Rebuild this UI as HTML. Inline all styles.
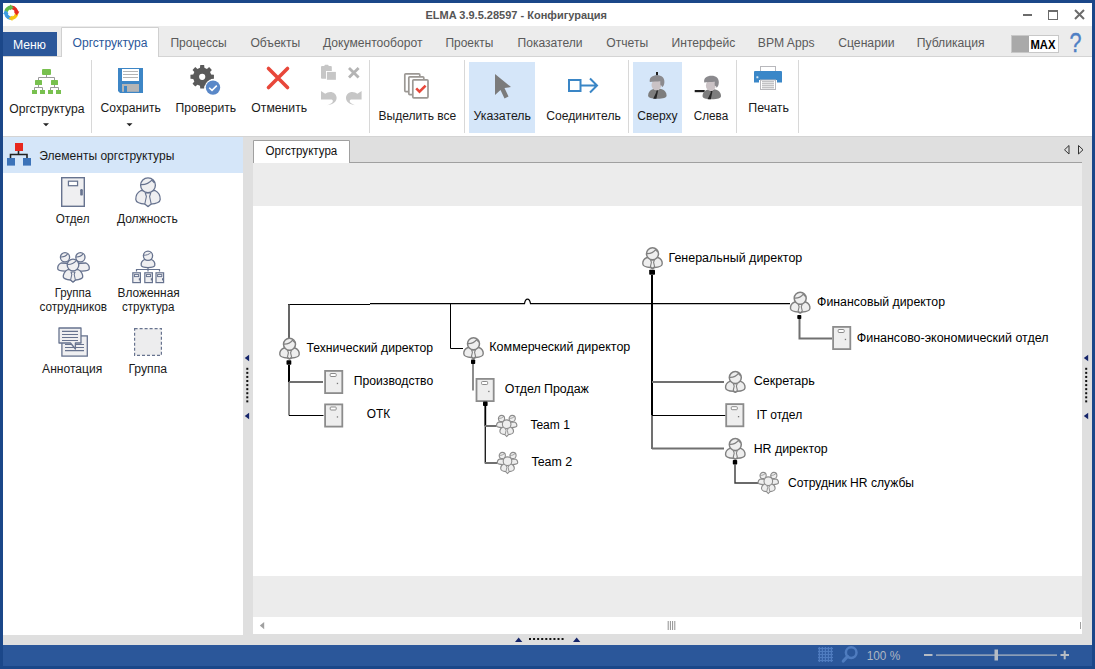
<!DOCTYPE html>
<html><head><meta charset="utf-8"><title>ELMA</title>
<style>html,body{margin:0;padding:0;width:1095px;height:669px;overflow:hidden;background:#1b4789}
svg{display:block} text{font-family:"Liberation Sans", sans-serif;}</style></head>
<body><svg width="1095" height="669" viewBox="0 0 1095 669">
<rect x="0" y="0" width="1095" height="669" fill="#1b4789" />
<rect x="3" y="3" width="1089" height="23" fill="#ffffff" />
<rect x="3" y="26" width="1089" height="31" fill="#ececec" />
<rect x="3" y="56" width="1089" height="1" fill="#d4d4d4" />
<rect x="3" y="57" width="1089" height="79" fill="#ffffff" />
<rect x="3" y="136" width="1089" height="1" fill="#d4d4d4" />
<g transform="translate(11.2,12.8)">
<path d="M-7,-1.6 A7.2,7.2 0 0 1 0.6,-7.2 L0.4,-3.6 A3.6,3.6 0 0 0 -3.5,-0.9 Z" fill="#62b94a"/>
<path d="M0.6,-7.2 A7.2,7.2 0 0 1 7.2,0.6 L3.6,0.4 A3.6,3.6 0 0 0 0.4,-3.6 Z" fill="#e62a1f"/>
<path d="M7.2,0.6 A7.2,7.2 0 0 1 -0.6,7.2 L-0.4,3.6 A3.6,3.6 0 0 0 3.6,0.4 Z" fill="#f6c412"/>
<path d="M-0.6,7.2 A7.2,7.2 0 0 1 -7,-1.6 L-3.5,-0.9 A3.6,3.6 0 0 0 -0.4,3.6 Z" fill="#3d9be0"/>
<path d="M-1.2,-8.2 L2.6,-5.4 L-1.2,-2.6 Z" fill="#62b94a"/>
<path d="M8.2,-1.2 L5.4,2.6 L2.6,-1.2 Z" fill="#e62a1f"/>
<path d="M1.2,8.2 L-2.6,5.4 L1.2,2.6 Z" fill="#f6c412"/>
<path d="M-8.2,1.2 L-5.4,-2.6 L-2.6,1.2 Z" fill="#3d9be0"/>
</g>
<text x="425.5" y="18.5" font-size="11" fill="#555555" font-weight="bold" text-anchor="start" textLength="181.5" lengthAdjust="spacingAndGlyphs" >ELMA 3.9.5.28597 - Конфигурация</text>
<rect x="1023" y="14" width="9" height="2" fill="#6b6b6b" />
<rect x="1048.5" y="10.5" width="9" height="9" fill="none" stroke="#6b6b6b" stroke-width="1"/>
<rect x="1048" y="10" width="10" height="2" fill="#6b6b6b" />
<path d="M1075,10 L1084,19 M1084,10 L1075,19" stroke="#6b6b6b" stroke-width="2"/>
<rect x="3" y="32" width="54" height="24" fill="#2b579a" />
<text x="13" y="48.8" font-size="12" fill="#ffffff" font-weight="normal" text-anchor="start" textLength="33" lengthAdjust="spacingAndGlyphs" >Меню</text>
<path d="M61.5,57 L61.5,27.5 L158.5,27.5 L158.5,57" fill="#ffffff" stroke="#d0d0d0" stroke-width="1"/>
<text x="72.5" y="47" font-size="12" fill="#2b579a" font-weight="normal" text-anchor="start" textLength="75" lengthAdjust="spacingAndGlyphs" >Оргструктура</text>
<text x="170.4" y="47" font-size="12" fill="#5a5a5a" font-weight="normal" text-anchor="start" textLength="56.2" lengthAdjust="spacingAndGlyphs" >Процессы</text>
<text x="250.4" y="47" font-size="12" fill="#5a5a5a" font-weight="normal" text-anchor="start" textLength="49.9" lengthAdjust="spacingAndGlyphs" >Объекты</text>
<text x="323" y="47" font-size="12" fill="#5a5a5a" font-weight="normal" text-anchor="start" textLength="99.5" lengthAdjust="spacingAndGlyphs" >Документооборот</text>
<text x="445.5" y="47" font-size="12" fill="#5a5a5a" font-weight="normal" text-anchor="start" textLength="47.9" lengthAdjust="spacingAndGlyphs" >Проекты</text>
<text x="517.5" y="47" font-size="12" fill="#5a5a5a" font-weight="normal" text-anchor="start" textLength="65.0" lengthAdjust="spacingAndGlyphs" >Показатели</text>
<text x="606.3" y="47" font-size="12" fill="#5a5a5a" font-weight="normal" text-anchor="start" textLength="41.9" lengthAdjust="spacingAndGlyphs" >Отчеты</text>
<text x="671.5" y="47" font-size="12" fill="#5a5a5a" font-weight="normal" text-anchor="start" textLength="63.8" lengthAdjust="spacingAndGlyphs" >Интерфейс</text>
<text x="757.8" y="47" font-size="12" fill="#5a5a5a" font-weight="normal" text-anchor="start" textLength="56.8" lengthAdjust="spacingAndGlyphs" >BPM Apps</text>
<text x="838.2" y="47" font-size="12" fill="#5a5a5a" font-weight="normal" text-anchor="start" textLength="56.4" lengthAdjust="spacingAndGlyphs" >Сценарии</text>
<text x="916.7" y="47" font-size="12" fill="#5a5a5a" font-weight="normal" text-anchor="start" textLength="68.0" lengthAdjust="spacingAndGlyphs" >Публикация</text>
<rect x="1011.5" y="35.5" width="47" height="17" fill="#ffffff" stroke="#c8c8c8" stroke-width="1"/>
<rect x="1012" y="36" width="17" height="16" fill="#a9a9a9" />
<text x="1030.5" y="49" font-size="12" fill="#000" font-weight="bold" text-anchor="start" textLength="25" lengthAdjust="spacingAndGlyphs" >MAX</text>
<text x="1069.5" y="52" font-size="28" fill="#4f7fc4" font-weight="normal" text-anchor="start" textLength="12" lengthAdjust="spacingAndGlyphs" stroke="#4f7fc4" stroke-width="0.4">?</text>
<rect x="91" y="60" width="1" height="73" fill="#d8d8d8" />
<rect x="369" y="60" width="1" height="73" fill="#d8d8d8" />
<rect x="464" y="60" width="1" height="73" fill="#d8d8d8" />
<rect x="628" y="60" width="1" height="73" fill="#d8d8d8" />
<rect x="736" y="60" width="1" height="73" fill="#d8d8d8" />
<rect x="798" y="60" width="1" height="73" fill="#d8d8d8" />
<rect x="469" y="62" width="66" height="71" fill="#d5e6f9" />
<rect x="633" y="62" width="49" height="71" fill="#d5e6f9" />
<g>
<path d="M46.5,75 V77.5 M38.5,80 V77.5 H54.5 V80 M38.5,85 V87.5 M34.5,90 V87.5 H42.5 V90 M54.5,85 V87.5 M50.5,90 V87.5 H58.5 V90" stroke="#9a9a9a" stroke-width="1" fill="none"/>
<rect x="42" y="69" width="9" height="6" rx="1" fill="#78c04f"/>
<rect x="35" y="80" width="7" height="5" rx="0.5" fill="#78c04f"/>
<rect x="51" y="80" width="7" height="5" rx="0.5" fill="#78c04f"/>
<rect x="32" y="90" width="5" height="4" fill="#78c04f"/>
<rect x="40" y="90" width="5" height="4" fill="#78c04f"/>
<rect x="48" y="90" width="5" height="4" fill="#78c04f"/>
<rect x="56" y="90" width="5" height="4" fill="#78c04f"/>
</g>
<text x="9.2" y="113.2" font-size="12" fill="#1a1a1a" font-weight="normal" text-anchor="start" textLength="75.3" lengthAdjust="spacingAndGlyphs" >Оргструктура</text>
<path d="M43,123.2 H49 L46,126.2 Z" fill="#222"/>
<g>
<path d="M118,68 H143 V93 H120 L118,91 Z" fill="#3d86c6"/>
<rect x="122" y="69" width="17" height="12" fill="#ffffff"/>
<path d="M123,71.5 H138 M123,74.5 H138 M123,77.5 H138" stroke="#b4b4b4" stroke-width="1"/>
<rect x="122" y="84" width="17" height="7.8" fill="#b5b5b5"/>
<rect x="124" y="86" width="3" height="6" fill="#3d86c6"/>
</g>
<text x="100.5" y="112" font-size="12" fill="#1a1a1a" font-weight="normal" text-anchor="start" textLength="60.4" lengthAdjust="spacingAndGlyphs" >Сохранить</text>
<path d="M126.5,123.2 H132.5 L129.5,126.2 Z" fill="#222"/>
<path d="M211.13,74.58 L213.94,74.85 L213.94,78.75 L211.13,79.02 L210.08,81.55 L211.88,83.72 L209.12,86.48 L206.95,84.68 L204.42,85.73 L204.15,88.54 L200.25,88.54 L199.98,85.73 L197.45,84.68 L195.28,86.48 L192.52,83.72 L194.32,81.55 L193.27,79.02 L190.46,78.75 L190.46,74.85 L193.27,74.58 L194.32,72.05 L192.52,69.88 L195.28,67.12 L197.45,68.92 L199.98,67.87 L200.25,65.06 L204.15,65.06 L204.42,67.87 L206.95,68.92 L209.12,67.12 L211.88,69.88 L210.08,72.05 Z M205.29999999999998,76.8 A3.1,3.1 0 1 0 199.1,76.8 A3.1,3.1 0 1 0 205.29999999999998,76.8 Z" fill="#5a5a5a" fill-rule="evenodd"/>
<circle cx="213" cy="87.6" r="8.3" fill="#ffffff"/><circle cx="213" cy="87.6" r="7.2" fill="#5a88c8"/>
<path d="M209.2,87.8 L212,90.4 L216.8,85.6" stroke="#fff" stroke-width="1.5" fill="none"/>
<text x="175.5" y="112" font-size="12" fill="#1a1a1a" font-weight="normal" text-anchor="start" textLength="60.7" lengthAdjust="spacingAndGlyphs" >Проверить</text>
<path d="M268.5,68.5 L287.5,87.5 M287.5,68.5 L268.5,87.5" stroke="#e8473a" stroke-width="3.6" stroke-linecap="round"/>
<text x="251.3" y="112" font-size="12" fill="#1a1a1a" font-weight="normal" text-anchor="start" textLength="55.8" lengthAdjust="spacingAndGlyphs" >Отменить</text>
<g fill="#c6c6c6">
<rect x="321" y="66" width="10.8" height="12.7" rx="1"/>
<rect x="324.5" y="64.8" width="4" height="2.5" rx="0.8"/>
<rect x="326" y="71" width="11" height="9.8" fill="#ffffff"/>
<rect x="326.9" y="71.9" width="9" height="7.9"/>
</g>
<path d="M349,68 L358.6,77.6 M358.6,68 L349,77.6" stroke="#b4b4b4" stroke-width="2.8"/>
<path d="M321,91 L321,99.6 L330.2,99.6 C332.6,99.2 333.8,101 332,102.8 C331,103.8 329.2,104.6 327.2,105.2 C333.5,104.6 336.8,101.5 336.6,97.5 C336.2,93 331.5,90.8 327.5,92.6 L325.2,93.8 Z" fill="#c6c6c6"/>
<path d="M321,91 L321,99.6 L330.2,99.6 C332.6,99.2 333.8,101 332,102.8 C331,103.8 329.2,104.6 327.2,105.2 C333.5,104.6 336.8,101.5 336.6,97.5 C336.2,93 331.5,90.8 327.5,92.6 L325.2,93.8 Z" fill="#c6c6c6" transform="translate(682.6,0) scale(-1,1)"/>
<g fill="#ffffff" stroke="#9c9894" stroke-width="1.7">
<rect x="404.8" y="73.8" width="15" height="17.8" rx="1"/>
<rect x="408.8" y="76.8" width="15" height="17.8" rx="1"/>
<rect x="412.8" y="79.8" width="15.2" height="18" rx="1"/>
</g>
<path d="M416.2,88.4 L419.5,91.6 L425.6,85.6" stroke="#e8473a" stroke-width="2.6" fill="none"/>
<text x="378.5" y="119.5" font-size="12" fill="#1a1a1a" font-weight="normal" text-anchor="start" textLength="77.8" lengthAdjust="spacingAndGlyphs" >Выделить все</text>
<path d="M495,74 L511,87 L504.5,88 L508.5,96.5 L504.5,98.5 L500.5,90 L495,95 Z" fill="#7b7b7b"/>
<text x="473.5" y="119.5" font-size="12" fill="#1a1a1a" font-weight="normal" text-anchor="start" textLength="57.5" lengthAdjust="spacingAndGlyphs" >Указатель</text>
<rect x="569" y="80" width="11.5" height="11" fill="none" stroke="#3a86c6" stroke-width="2"/>
<path d="M580.5,85.5 H597 M590,78.5 L597,85.5 L590,92.5" stroke="#3a86c6" stroke-width="2" fill="none"/>
<text x="546.3" y="119.5" font-size="12" fill="#1a1a1a" font-weight="normal" text-anchor="start" textLength="74.5" lengthAdjust="spacingAndGlyphs" >Соединитель</text>
<g transform="translate(647.8,72)"><rect x="8.2" y="0" width="2" height="3.5" fill="#1e1e1e"/><path d="M0.3,23.5 C0.5,18.8 4,16.5 9.5,16.5 C15,16.5 18.6,18.8 18.8,23.5 C18.8,25.8 15.5,26.8 9.5,26.8 C3.5,26.8 0.3,25.8 0.3,23.5 Z" fill="#7d7d7d"/>
<path d="M5.8,16.6 L9,18.8 L12.5,16.6 L12.3,15.6 H6 Z" fill="#ffffff"/>
<path d="M8.3,18.2 H10.3 L10,20 L8.6,26.8 L5.4,26.8 L8.6,20 Z" fill="#262626"/>
<ellipse cx="8.6" cy="13" rx="4.9" ry="5.3" fill="#cac2c5"/>
<path d="M2,10 C1.3,5.5 4.5,3.3 9.3,3.3 C14,3.3 16.8,5.8 16.6,10 C16.5,12.8 15.6,14.6 14.2,15.3 C14.2,14 13.6,13 12.6,13.2 L12.4,9.3 C9,9.6 5,9.6 2,10 Z" fill="#8b8a8e"/>
</g>
<text x="637.3" y="119.5" font-size="12" fill="#1a1a1a" font-weight="normal" text-anchor="start" textLength="40.3" lengthAdjust="spacingAndGlyphs" >Сверху</text>
<g transform="translate(702.2,72.5)"><rect x="-7.5" y="17.5" width="10" height="2.2" fill="#1e1e1e"/><path d="M0.3,23.5 C0.5,18.8 4,16.5 9.5,16.5 C15,16.5 18.6,18.8 18.8,23.5 C18.8,25.8 15.5,26.8 9.5,26.8 C3.5,26.8 0.3,25.8 0.3,23.5 Z" fill="#7d7d7d"/>
<path d="M5.8,16.6 L9,18.8 L12.5,16.6 L12.3,15.6 H6 Z" fill="#ffffff"/>
<path d="M8.3,18.2 H10.3 L10,20 L8.6,26.8 L5.4,26.8 L8.6,20 Z" fill="#262626"/>
<ellipse cx="8.6" cy="13" rx="4.9" ry="5.3" fill="#cac2c5"/>
<path d="M2,10 C1.3,5.5 4.5,3.3 9.3,3.3 C14,3.3 16.8,5.8 16.6,10 C16.5,12.8 15.6,14.6 14.2,15.3 C14.2,14 13.6,13 12.6,13.2 L12.4,9.3 C9,9.6 5,9.6 2,10 Z" fill="#8b8a8e"/>
</g>
<text x="693.7" y="119.5" font-size="12" fill="#1a1a1a" font-weight="normal" text-anchor="start" textLength="34.5" lengthAdjust="spacingAndGlyphs" >Слева</text>
<g>
<rect x="760.5" y="66.5" width="15" height="6" fill="#ffffff" stroke="#b8b8bc" stroke-width="1"/>
<path d="M755,71 H781 Q782,71 782,72 V82.6 H777 V80 H759 V82.6 H754 V72 Q754,71 755,71 Z" fill="#3a87c8"/>
<rect x="756.4" y="76.3" width="2" height="2" rx="0.5" fill="#d9e8f5"/>
<rect x="760.5" y="80" width="15" height="9.5" fill="#ffffff" stroke="#b8b8bc" stroke-width="1"/>
<path d="M762,81.8 H774 M762,83.8 H774 M762,85.8 H774 M762,87.8 H774" stroke="#a8a8ac" stroke-width="1"/>
</g>
<text x="748.3" y="112" font-size="12" fill="#1a1a1a" font-weight="normal" text-anchor="start" textLength="40.6" lengthAdjust="spacingAndGlyphs" >Печать</text>
<rect x="3" y="137" width="240" height="498" fill="#ffffff" />
<rect x="3" y="137" width="240" height="36" fill="#d5e6f9" />
<g>
<rect x="15" y="143" width="8" height="8" fill="#e8281e"/>
<path d="M18.5,151 V154.5 M10.5,158 V154.5 H27 V158" stroke="#222" stroke-width="1.6" fill="none"/>
<rect x="7" y="158" width="8" height="7.6" fill="#3c73b9"/>
<rect x="23" y="158" width="8" height="7.6" fill="#3c73b9"/>
</g>
<text x="39.3" y="160" font-size="12" fill="#1a1a1a" font-weight="normal" text-anchor="start" textLength="135" lengthAdjust="spacingAndGlyphs" >Элементы оргструктуры</text>
<g transform="translate(61,177)">
<rect x="0.7" y="0.7" width="22.6" height="28.6" fill="#efeff1" stroke="#67738f" stroke-width="1.4"/>
<rect x="7.4399999999999995" y="4.2" width="9.120000000000001" height="4.5" fill="#fff" stroke="#67738f" stroke-width="1.26"/>
<rect x="19.200000000000003" y="12.0" width="2.64" height="6.6" rx="1.2000000000000002" fill="#67738f"/>
</g>
<text x="55.7" y="223" font-size="12" fill="#1a1a1a" font-weight="normal" text-anchor="start" textLength="33.8" lengthAdjust="spacingAndGlyphs" >Отдел</text>
<g transform="translate(135,177) scale(1,1)">
<path d="M6,13.5 C2,15.5 0.7,19.5 0.8,22.5 C1,25.5 5,26.8 10.5,27.2 L13,29.5 L15.5,27.2 C21,26.8 25,25.5 25.2,22.5 C25.3,19.5 24,15.5 20,13.5 Z" fill="#efeff1" stroke="#67738f" stroke-width="1.3" stroke-linejoin="round"/>
<path d="M10.3,16 L15.7,16 L14.6,19.5 L16.2,27 L13,29.5 L9.8,27 L11.4,19.5 Z" fill="#efeff1" stroke="#67738f" stroke-width="1.105" stroke-linejoin="round"/>
<circle cx="13" cy="8.2" r="7.4" fill="#efeff1" stroke="#67738f" stroke-width="1.3"/>
<path d="M5.8,7.6 C10.5,7.8 14.5,6 17.3,2.6 M16.8,3 L19.6,6" stroke="#67738f" stroke-width="1.1700000000000002" fill="none"/>
</g>
<text x="116.9" y="223" font-size="12" fill="#1a1a1a" font-weight="normal" text-anchor="start" textLength="61" lengthAdjust="spacingAndGlyphs" >Должность</text>
<g transform="translate(57,252) scale(1,1)">
<path d="M4,11 C1,12.5 0.5,15 0.8,17 C1.3,18.8 4,19 8,19.2 L14,19 L14,11.5 Z" fill="#efeff1" stroke="#67738f" stroke-width="1.3" stroke-linejoin="round"/>
<path d="M29,11 C32,12.5 32.5,15 32.2,17 C31.7,18.8 29,19 25,19.2 L19,19 L19,11.5 Z" fill="#efeff1" stroke="#67738f" stroke-width="1.3" stroke-linejoin="round"/>
<circle cx="8" cy="5.2" r="4.6" fill="#efeff1" stroke="#67738f" stroke-width="1.3"/>
<circle cx="23.4" cy="5.2" r="4.6" fill="#efeff1" stroke="#67738f" stroke-width="1.3"/>
<path d="M3.6,4.9 C6.5,5.1 9,4.1 10.6,1.9 M19,4.9 C21.9,5.1 24.4,4.1 26,1.9" stroke="#67738f" stroke-width="1.04" fill="none"/>
<path d="M11,17.5 C7.5,19 6,23 6.3,25 C6.8,27 9,27.6 13.5,28 L16,30 L18.5,28 C23,27.6 25.2,27 25.7,25 C26,23 24.5,19 21,17.5 Z" fill="#efeff1" stroke="#67738f" stroke-width="1.3" stroke-linejoin="round"/>
<path d="M14,20 L18,20 L17.2,22.5 L18.4,28 L16,30 L13.6,28 L14.8,22.5 Z" fill="#efeff1" stroke="#67738f" stroke-width="1.04" stroke-linejoin="round"/>
<circle cx="16" cy="13" r="5.8" fill="#efeff1" stroke="#67738f" stroke-width="1.3"/>
<path d="M10.4,12.4 C14,12.6 17,11.2 19.4,8.6" stroke="#67738f" stroke-width="1.04" fill="none"/>
</g>
<text x="54.7" y="297" font-size="12" fill="#1a1a1a" font-weight="normal" text-anchor="start" textLength="36.4" lengthAdjust="spacingAndGlyphs" >Группа</text>
<text x="39.4" y="310.5" font-size="12" fill="#1a1a1a" font-weight="normal" text-anchor="start" textLength="67.6" lengthAdjust="spacingAndGlyphs" >сотрудников</text>
<g>
<path d="M144.5,259.5 C141.5,261 141,264 141.3,265.5 C141.8,267.3 144,267.5 148,267.6 C152,267.5 154.2,267.3 154.7,265.5 C155,264 154.5,261 151.5,259.5 Z" fill="#efeff1" stroke="#67738f" stroke-width="1.3"/>
<circle cx="148" cy="255.8" r="4.6" fill="#efeff1" stroke="#67738f" stroke-width="1.3"/>
<path d="M143.6,255.2 C146.5,255.4 149,254.4 150.8,252.6" stroke="#67738f" stroke-width="1" fill="none"/>
<path d="M148,267.6 V269.5 M136.5,271.5 V269.5 H159.5 V271.5 M148,269.5 V271.5" stroke="#67738f" stroke-width="1.2" fill="none"/>
</g>
<g transform="translate(132.2,272.2)">
<rect x="0.6" y="0.6" width="7.6" height="9.8" fill="#efeff1" stroke="#67738f" stroke-width="1.2"/>
<rect x="2.2" y="2.4" width="4.2" height="2" fill="#fff" stroke="#67738f" stroke-width="1"/>
<rect x="6.6" y="6" width="1.2" height="2.2" fill="#67738f"/>
</g>
<g transform="translate(144.2,272.2)">
<rect x="0.6" y="0.6" width="7.6" height="9.8" fill="#efeff1" stroke="#67738f" stroke-width="1.2"/>
<rect x="2.2" y="2.4" width="4.2" height="2" fill="#fff" stroke="#67738f" stroke-width="1"/>
<rect x="6.6" y="6" width="1.2" height="2.2" fill="#67738f"/>
</g>
<g transform="translate(155.4,272.2)">
<rect x="0.6" y="0.6" width="7.6" height="9.8" fill="#efeff1" stroke="#67738f" stroke-width="1.2"/>
<rect x="2.2" y="2.4" width="4.2" height="2" fill="#fff" stroke="#67738f" stroke-width="1"/>
<rect x="6.6" y="6" width="1.2" height="2.2" fill="#67738f"/>
</g>
<text x="117.5" y="297" font-size="12" fill="#1a1a1a" font-weight="normal" text-anchor="start" textLength="62.2" lengthAdjust="spacingAndGlyphs" >Вложенная</text>
<text x="122" y="310.5" font-size="12" fill="#1a1a1a" font-weight="normal" text-anchor="start" textLength="52.5" lengthAdjust="spacingAndGlyphs" >структура</text>
<g>
<rect x="61.9" y="335.9" width="25.4" height="20.2" fill="#efeff1" stroke="#67738f" stroke-width="1.3"/>
<path d="M65,344.5 H84 M65,347.5 H84 M65,350.6 H84" stroke="#67738f" stroke-width="1.1"/>
<path d="M59,328 H81 V343 H75.4 V349 L70.5,343 H59 Z" fill="#efeff1" stroke="#67738f" stroke-width="1.3" stroke-linejoin="round"/>
<path d="M62,331.4 H78 M62,334.5 H78 M62,337.5 H78 M62,340.5 H78" stroke="#67738f" stroke-width="1.1"/>
</g>
<text x="42.1" y="373" font-size="12" fill="#1a1a1a" font-weight="normal" text-anchor="start" textLength="60.1" lengthAdjust="spacingAndGlyphs" >Аннотация</text>
<rect x="134.6" y="328.6" width="26.8" height="26.8" fill="#ededee" stroke="#67738f" stroke-width="1.2" stroke-dasharray="3,2"/>
<text x="128.4" y="373" font-size="12" fill="#1a1a1a" font-weight="normal" text-anchor="start" textLength="38.7" lengthAdjust="spacingAndGlyphs" >Группа</text>
<rect x="243" y="137" width="10" height="508" fill="#dfdfdf" />
<rect x="1082" y="137" width="10" height="508" fill="#dfdfdf" />
<rect x="3" y="634" width="1089" height="11" fill="#dfdfdf" />
<rect x="3" y="634" width="240" height="1" fill="#ffffff" />
<path d="M249.1,354.8 L249.1,361.3 L244.7,358.05 Z" fill="#15256a"/>
<path d="M249.1,412.8 L249.1,419.3 L244.7,416.05 Z" fill="#15256a"/>
<rect x="246.3" y="367.8" width="2" height="2" fill="#111" />
<rect x="246.3" y="371.87" width="2" height="2" fill="#111" />
<rect x="246.3" y="375.94" width="2" height="2" fill="#111" />
<rect x="246.3" y="380.01" width="2" height="2" fill="#111" />
<rect x="246.3" y="384.08000000000004" width="2" height="2" fill="#111" />
<rect x="246.3" y="388.15000000000003" width="2" height="2" fill="#111" />
<rect x="246.3" y="392.22" width="2" height="2" fill="#111" />
<rect x="246.3" y="396.29" width="2" height="2" fill="#111" />
<rect x="246.3" y="400.36" width="2" height="2" fill="#111" />
<path d="M1088.2,354.8 L1088.2,361.3 L1083.8,358.05 Z" fill="#15256a"/>
<path d="M1088.2,412.8 L1088.2,419.3 L1083.8,416.05 Z" fill="#15256a"/>
<rect x="1085.2" y="367.8" width="2" height="2" fill="#111" />
<rect x="1085.2" y="371.87" width="2" height="2" fill="#111" />
<rect x="1085.2" y="375.94" width="2" height="2" fill="#111" />
<rect x="1085.2" y="380.01" width="2" height="2" fill="#111" />
<rect x="1085.2" y="384.08000000000004" width="2" height="2" fill="#111" />
<rect x="1085.2" y="388.15000000000003" width="2" height="2" fill="#111" />
<rect x="1085.2" y="392.22" width="2" height="2" fill="#111" />
<rect x="1085.2" y="396.29" width="2" height="2" fill="#111" />
<rect x="1085.2" y="400.36" width="2" height="2" fill="#111" />
<path d="M515,642.0 L522.3,642.0 L518.65,637.4 Z" fill="#15256a"/>
<path d="M573,642.0 L580.3,642.0 L576.65,637.4 Z" fill="#15256a"/>
<rect x="529.0" y="638" width="2" height="2" fill="#111" />
<rect x="533.07" y="638" width="2" height="2" fill="#111" />
<rect x="537.14" y="638" width="2" height="2" fill="#111" />
<rect x="541.21" y="638" width="2" height="2" fill="#111" />
<rect x="545.28" y="638" width="2" height="2" fill="#111" />
<rect x="549.35" y="638" width="2" height="2" fill="#111" />
<rect x="553.42" y="638" width="2" height="2" fill="#111" />
<rect x="557.49" y="638" width="2" height="2" fill="#111" />
<rect x="561.56" y="638" width="2" height="2" fill="#111" />
<rect x="253" y="137" width="829" height="26" fill="#dfdfdf" />
<rect x="253" y="162" width="829" height="1" fill="#a0a0a0" />
<path d="M253.5,163 V140.5 H349.5 V163" fill="#ffffff" stroke="#a0a0a0" stroke-width="1"/>
<rect x="254" y="162" width="95" height="1.5" fill="#ffffff" />
<text x="265.6" y="155" font-size="12" fill="#111" font-weight="normal" text-anchor="start" textLength="71.7" lengthAdjust="spacingAndGlyphs" >Оргструктура</text>
<path d="M1069,145.5 L1064.5,149.8 L1069,154 Z" fill="none" stroke="#333" stroke-width="1"/>
<path d="M1078.5,145.5 L1083,149.8 L1078.5,154 Z" fill="none" stroke="#333" stroke-width="1"/>
<rect x="253" y="163" width="829" height="43" fill="#ececec" />
<rect x="253" y="206" width="829" height="370" fill="#ffffff" />
<rect x="253" y="576" width="829" height="41" fill="#ececec" />
<rect x="253" y="617" width="829" height="17" fill="#ffffff" />
<path d="M264.2,621.9 L264.2,629.2 L259.8,625.5 Z" fill="#a0a0a0"/>
<path d="M668.2,621 V630 M670.4,621 V630 M672.6,621 V630 M674.8,621 V630" stroke="#909090" stroke-width="1"/>
<rect x="1080" y="622" width="1" height="7" fill="#a0a0a0" />
<rect x="3" y="645" width="1089" height="21" fill="#2b579a" />
<g stroke="#4f7cbf" stroke-width="1.3"><path d="M819.4,647 V662"/><path d="M822.4,647 V662"/><path d="M825.4,647 V662"/><path d="M828.4,647 V662"/><path d="M831.4,647 V662"/><path d="M818,648.5 H833"/><path d="M818,651.5 H833"/><path d="M818,654.5 H833"/><path d="M818,657.5 H833"/><path d="M818,660.5 H833"/></g>
<circle cx="851.2" cy="652.6" r="5.3" fill="none" stroke="#4f7cbf" stroke-width="2.5"/><path d="M847.5,656.5 L843.3,661" stroke="#4f7cbf" stroke-width="3.2" stroke-linecap="round"/>
<text x="866.7" y="659.7" font-size="12" fill="#aeb6c2" font-weight="normal" text-anchor="start" textLength="33.6" lengthAdjust="spacingAndGlyphs" >100 %</text>
<rect x="924" y="654" width="8.5" height="2" fill="#b6bcc4" />
<rect x="936" y="654.5" width="121" height="1.2" fill="#b6bcc4" />
<rect x="994.5" y="649.5" width="3.5" height="11" fill="#b6bcc4" />
<rect x="1060.5" y="654" width="8.5" height="2" fill="#b6bcc4" />
<rect x="1063.7" y="650.7" width="2" height="8.6" fill="#b6bcc4" />
<path d="M288,304.5 H370" stroke="#000000" stroke-width="1.1" fill="none"/>
<path d="M370,303.6 H524.5 C525.5,297.5 529.5,297.5 530.5,303.6 H790" stroke="#000000" stroke-width="1.2" fill="none"/>
<path d="M289,304 V338" stroke="#404040" stroke-width="1.6" fill="none"/>
<path d="M450.5,303 V348.5 H463" stroke="#000000" stroke-width="1" fill="none"/>
<path d="M652,275 V415.5" stroke="#000000" stroke-width="2" fill="none"/>
<path d="M652,415 V449" stroke="#707070" stroke-width="2" fill="none"/>
<path d="M652,382 H724" stroke="#707070" stroke-width="2" fill="none"/>
<path d="M652,415.5 H725.5" stroke="#000000" stroke-width="1" fill="none"/>
<path d="M652,448.5 H724" stroke="#707070" stroke-width="2" fill="none"/>
<path d="M289,365 V382" stroke="#000000" stroke-width="2" fill="none"/>
<path d="M289,382 V415.5" stroke="#707070" stroke-width="1.6" fill="none"/>
<path d="M289,382 H323" stroke="#707070" stroke-width="2" fill="none"/>
<path d="M289,415.5 H323.5" stroke="#000000" stroke-width="1" fill="none"/>
<path d="M473,364 V390.5" stroke="#707070" stroke-width="1.6" fill="none"/>
<path d="M485.3,406 V426" stroke="#000000" stroke-width="1.8" fill="none"/>
<path d="M485.3,426 V463.5" stroke="#202020" stroke-width="1.4" fill="none"/>
<path d="M485,426 H496.5" stroke="#707070" stroke-width="2" fill="none"/>
<path d="M485,463 H497" stroke="#707070" stroke-width="2" fill="none"/>
<path d="M799.5,319 V338.5 H832" stroke="#707070" stroke-width="2" fill="none"/>
<path d="M735,464.5 V483 H758" stroke="#3a3a3a" stroke-width="1.4" fill="none"/>
<g transform="translate(642,247)">
<path d="M5,10.5 C1.5,12 0.6,15 0.8,17 C1.2,19.6 4.5,20.3 8.5,20.5 L10.5,21.5 L12.5,20.5 C16.5,20.3 19.8,19.6 20.2,17 C20.4,15 19.5,12 16,10.5 Z" fill="#eeeeee" stroke="#808080" stroke-width="1.4" stroke-linejoin="round"/>
<path d="M8.6,13 L12.4,13 L11.6,15.3 L12.6,19.6 L10.5,21.3 L8.4,19.6 L9.4,15.3 Z" fill="#eeeeee" stroke="#808080" stroke-width="1.1" stroke-linejoin="round"/>
<circle cx="10.5" cy="6.8" r="6" fill="#eeeeee" stroke="#808080" stroke-width="1.5"/>
<path d="M4.8,6.6 C8.5,6.8 11.6,5.3 13.8,2.3 M13.4,2.6 L15.8,5.2" stroke="#808080" stroke-width="1.1" fill="none"/>
</g>
<rect x="649.2" y="269.8" width="5.8" height="5" rx="0.8" fill="#000"/>
<text x="668.5" y="262" font-size="12" fill="#000" font-weight="normal" text-anchor="start" textLength="133.8" lengthAdjust="spacingAndGlyphs" >Генеральный директор</text>
<g transform="translate(279,337.5)">
<path d="M5,10.5 C1.5,12 0.6,15 0.8,17 C1.2,19.6 4.5,20.3 8.5,20.5 L10.5,21.5 L12.5,20.5 C16.5,20.3 19.8,19.6 20.2,17 C20.4,15 19.5,12 16,10.5 Z" fill="#eeeeee" stroke="#808080" stroke-width="1.4" stroke-linejoin="round"/>
<path d="M8.6,13 L12.4,13 L11.6,15.3 L12.6,19.6 L10.5,21.3 L8.4,19.6 L9.4,15.3 Z" fill="#eeeeee" stroke="#808080" stroke-width="1.1" stroke-linejoin="round"/>
<circle cx="10.5" cy="6.8" r="6" fill="#eeeeee" stroke="#808080" stroke-width="1.5"/>
<path d="M4.8,6.6 C8.5,6.8 11.6,5.3 13.8,2.3 M13.4,2.6 L15.8,5.2" stroke="#808080" stroke-width="1.1" fill="none"/>
</g>
<rect x="286.5" y="360.3" width="4.8" height="4.5" rx="0.8" fill="#000"/>
<text x="306.4" y="352" font-size="12" fill="#000" font-weight="normal" text-anchor="start" textLength="126.7" lengthAdjust="spacingAndGlyphs" >Технический директор</text>
<g transform="translate(463,337)">
<path d="M5,10.5 C1.5,12 0.6,15 0.8,17 C1.2,19.6 4.5,20.3 8.5,20.5 L10.5,21.5 L12.5,20.5 C16.5,20.3 19.8,19.6 20.2,17 C20.4,15 19.5,12 16,10.5 Z" fill="#eeeeee" stroke="#808080" stroke-width="1.4" stroke-linejoin="round"/>
<path d="M8.6,13 L12.4,13 L11.6,15.3 L12.6,19.6 L10.5,21.3 L8.4,19.6 L9.4,15.3 Z" fill="#eeeeee" stroke="#808080" stroke-width="1.1" stroke-linejoin="round"/>
<circle cx="10.5" cy="6.8" r="6" fill="#eeeeee" stroke="#808080" stroke-width="1.5"/>
<path d="M4.8,6.6 C8.5,6.8 11.6,5.3 13.8,2.3 M13.4,2.6 L15.8,5.2" stroke="#808080" stroke-width="1.1" fill="none"/>
</g>
<rect x="471" y="359.4" width="4.2" height="4.6" rx="0.8" fill="#000"/>
<text x="489.3" y="350.8" font-size="12" fill="#000" font-weight="normal" text-anchor="start" textLength="141" lengthAdjust="spacingAndGlyphs" >Коммерческий директор</text>
<g transform="translate(789.7,291.5)">
<path d="M5,10.5 C1.5,12 0.6,15 0.8,17 C1.2,19.6 4.5,20.3 8.5,20.5 L10.5,21.5 L12.5,20.5 C16.5,20.3 19.8,19.6 20.2,17 C20.4,15 19.5,12 16,10.5 Z" fill="#eeeeee" stroke="#808080" stroke-width="1.4" stroke-linejoin="round"/>
<path d="M8.6,13 L12.4,13 L11.6,15.3 L12.6,19.6 L10.5,21.3 L8.4,19.6 L9.4,15.3 Z" fill="#eeeeee" stroke="#808080" stroke-width="1.1" stroke-linejoin="round"/>
<circle cx="10.5" cy="6.8" r="6" fill="#eeeeee" stroke="#808080" stroke-width="1.5"/>
<path d="M4.8,6.6 C8.5,6.8 11.6,5.3 13.8,2.3 M13.4,2.6 L15.8,5.2" stroke="#808080" stroke-width="1.1" fill="none"/>
</g>
<rect x="797.3" y="315" width="4" height="4" rx="0.8" fill="#000"/>
<text x="817.1" y="306.2" font-size="12" fill="#000" font-weight="normal" text-anchor="start" textLength="127.9" lengthAdjust="spacingAndGlyphs" >Финансовый директор</text>
<g transform="translate(832.2,326)">
<rect x="0.9" y="0.9" width="17.2" height="22.2" fill="#eeeeee" stroke="#8c8c8c" stroke-width="1.8"/>
<rect x="6" y="3.5" width="6" height="3" rx="0.8" fill="#fff" stroke="#8a8a8a" stroke-width="1"/>
<rect x="12.6" y="12.8" width="1.3" height="1.3" fill="#777"/>
</g>
<text x="856.7" y="341.5" font-size="12" fill="#000" font-weight="normal" text-anchor="start" textLength="191.8" lengthAdjust="spacingAndGlyphs" >Финансово-экономический отдел</text>
<g transform="translate(324.2,370)">
<rect x="0.9" y="0.9" width="17.2" height="22.2" fill="#eeeeee" stroke="#8c8c8c" stroke-width="1.8"/>
<rect x="6" y="3.5" width="6" height="3" rx="0.8" fill="#fff" stroke="#8a8a8a" stroke-width="1"/>
<rect x="12.6" y="12.8" width="1.3" height="1.3" fill="#777"/>
</g>
<text x="353.7" y="385" font-size="12" fill="#000" font-weight="normal" text-anchor="start" textLength="79.5" lengthAdjust="spacingAndGlyphs" >Производство</text>
<g transform="translate(324.2,403.5)">
<rect x="0.9" y="0.9" width="17.2" height="22.2" fill="#eeeeee" stroke="#8c8c8c" stroke-width="1.8"/>
<rect x="6" y="3.5" width="6" height="3" rx="0.8" fill="#fff" stroke="#8a8a8a" stroke-width="1"/>
<rect x="12.6" y="12.8" width="1.3" height="1.3" fill="#777"/>
</g>
<text x="366.8" y="418.3" font-size="12" fill="#000" font-weight="normal" text-anchor="start" textLength="23.4" lengthAdjust="spacingAndGlyphs" >ОТК</text>
<g transform="translate(475.6,378)">
<rect x="0.9" y="0.9" width="17.2" height="22.2" fill="#eeeeee" stroke="#8c8c8c" stroke-width="1.8"/>
<rect x="6" y="3.5" width="6" height="3" rx="0.8" fill="#fff" stroke="#8a8a8a" stroke-width="1"/>
<rect x="12.6" y="12.8" width="1.3" height="1.3" fill="#777"/>
</g>
<rect x="483" y="401.6" width="4.6" height="4.4" rx="0.8" fill="#000"/>
<text x="504.8" y="392.7" font-size="12" fill="#000" font-weight="normal" text-anchor="start" textLength="84.1" lengthAdjust="spacingAndGlyphs" >Отдел Продаж</text>
<g transform="translate(496.2,415)">
<path d="M2.5,7 C0.5,8 0.2,10 0.4,11 C0.8,12.2 3,12.4 5.5,12.5 L9.5,12.4 L9.5,7.5 Z" fill="#eeeeee" stroke="#8c8c8c" stroke-width="1.1"/>
<path d="M18.5,7 C20.5,8 20.8,10 20.6,11 C20.2,12.2 18,12.4 15.5,12.5 L11.5,12.4 L11.5,7.5 Z" fill="#eeeeee" stroke="#8c8c8c" stroke-width="1.1"/>
<circle cx="5.3" cy="3.5" r="3.1" fill="#eeeeee" stroke="#8c8c8c" stroke-width="1.1"/>
<circle cx="16" cy="3.5" r="3.1" fill="#eeeeee" stroke="#8c8c8c" stroke-width="1.1"/>
<path d="M2.4,3.3 C4.5,3.5 6.3,2.8 7.6,1.3 M13.1,3.3 C15.2,3.5 17,2.8 18.3,1.3" stroke="#8c8c8c" stroke-width="0.8" fill="none"/>
<path d="M7,11.8 C4.5,13 3.5,15.5 3.8,17 C4.2,18.8 6,19.3 8.8,19.6 L10.5,21.5 L12.2,19.6 C15,19.3 16.8,18.8 17.2,17 C17.5,15.5 16.5,13 14,11.8 Z" fill="#eeeeee" stroke="#8c8c8c" stroke-width="1.1"/>
<path d="M9.2,13.8 L11.8,13.8 L11.2,15.5 L12,19.6 L10.5,21.3 L9,19.6 L9.8,15.5 Z" fill="#eeeeee" stroke="#8c8c8c" stroke-width="0.9"/>
<circle cx="10.5" cy="9.2" r="4.3" fill="#eeeeee" stroke="#8c8c8c" stroke-width="1.1"/>
</g>
<text x="530.4" y="428.8" font-size="12" fill="#000" font-weight="normal" text-anchor="start" textLength="39.5" lengthAdjust="spacingAndGlyphs" >Team 1</text>
<g transform="translate(497,452)">
<path d="M2.5,7 C0.5,8 0.2,10 0.4,11 C0.8,12.2 3,12.4 5.5,12.5 L9.5,12.4 L9.5,7.5 Z" fill="#eeeeee" stroke="#8c8c8c" stroke-width="1.1"/>
<path d="M18.5,7 C20.5,8 20.8,10 20.6,11 C20.2,12.2 18,12.4 15.5,12.5 L11.5,12.4 L11.5,7.5 Z" fill="#eeeeee" stroke="#8c8c8c" stroke-width="1.1"/>
<circle cx="5.3" cy="3.5" r="3.1" fill="#eeeeee" stroke="#8c8c8c" stroke-width="1.1"/>
<circle cx="16" cy="3.5" r="3.1" fill="#eeeeee" stroke="#8c8c8c" stroke-width="1.1"/>
<path d="M2.4,3.3 C4.5,3.5 6.3,2.8 7.6,1.3 M13.1,3.3 C15.2,3.5 17,2.8 18.3,1.3" stroke="#8c8c8c" stroke-width="0.8" fill="none"/>
<path d="M7,11.8 C4.5,13 3.5,15.5 3.8,17 C4.2,18.8 6,19.3 8.8,19.6 L10.5,21.5 L12.2,19.6 C15,19.3 16.8,18.8 17.2,17 C17.5,15.5 16.5,13 14,11.8 Z" fill="#eeeeee" stroke="#8c8c8c" stroke-width="1.1"/>
<path d="M9.2,13.8 L11.8,13.8 L11.2,15.5 L12,19.6 L10.5,21.3 L9,19.6 L9.8,15.5 Z" fill="#eeeeee" stroke="#8c8c8c" stroke-width="0.9"/>
<circle cx="10.5" cy="9.2" r="4.3" fill="#eeeeee" stroke="#8c8c8c" stroke-width="1.1"/>
</g>
<text x="531.5" y="465.8" font-size="12" fill="#000" font-weight="normal" text-anchor="start" textLength="40.7" lengthAdjust="spacingAndGlyphs" >Team 2</text>
<g transform="translate(724.8,370.8)">
<path d="M5,10.5 C1.5,12 0.6,15 0.8,17 C1.2,19.6 4.5,20.3 8.5,20.5 L10.5,21.5 L12.5,20.5 C16.5,20.3 19.8,19.6 20.2,17 C20.4,15 19.5,12 16,10.5 Z" fill="#eeeeee" stroke="#808080" stroke-width="1.4" stroke-linejoin="round"/>
<path d="M8.6,13 L12.4,13 L11.6,15.3 L12.6,19.6 L10.5,21.3 L8.4,19.6 L9.4,15.3 Z" fill="#eeeeee" stroke="#808080" stroke-width="1.1" stroke-linejoin="round"/>
<circle cx="10.5" cy="6.8" r="6" fill="#eeeeee" stroke="#808080" stroke-width="1.5"/>
<path d="M4.8,6.6 C8.5,6.8 11.6,5.3 13.8,2.3 M13.4,2.6 L15.8,5.2" stroke="#808080" stroke-width="1.1" fill="none"/>
</g>
<text x="753.7" y="385.3" font-size="12" fill="#000" font-weight="normal" text-anchor="start" textLength="61.1" lengthAdjust="spacingAndGlyphs" >Секретарь</text>
<g transform="translate(725.3,403.2)">
<rect x="0.9" y="0.9" width="17.2" height="22.2" fill="#eeeeee" stroke="#8c8c8c" stroke-width="1.8"/>
<rect x="6" y="3.5" width="6" height="3" rx="0.8" fill="#fff" stroke="#8a8a8a" stroke-width="1"/>
<rect x="12.6" y="12.8" width="1.3" height="1.3" fill="#777"/>
</g>
<text x="756.4" y="419" font-size="12" fill="#000" font-weight="normal" text-anchor="start" textLength="45.8" lengthAdjust="spacingAndGlyphs" >IT отдел</text>
<g transform="translate(724.8,437.8)">
<path d="M5,10.5 C1.5,12 0.6,15 0.8,17 C1.2,19.6 4.5,20.3 8.5,20.5 L10.5,21.5 L12.5,20.5 C16.5,20.3 19.8,19.6 20.2,17 C20.4,15 19.5,12 16,10.5 Z" fill="#eeeeee" stroke="#808080" stroke-width="1.4" stroke-linejoin="round"/>
<path d="M8.6,13 L12.4,13 L11.6,15.3 L12.6,19.6 L10.5,21.3 L8.4,19.6 L9.4,15.3 Z" fill="#eeeeee" stroke="#808080" stroke-width="1.1" stroke-linejoin="round"/>
<circle cx="10.5" cy="6.8" r="6" fill="#eeeeee" stroke="#808080" stroke-width="1.5"/>
<path d="M4.8,6.6 C8.5,6.8 11.6,5.3 13.8,2.3 M13.4,2.6 L15.8,5.2" stroke="#808080" stroke-width="1.1" fill="none"/>
</g>
<rect x="732.8" y="460" width="4.4" height="4.6" rx="0.8" fill="#000"/>
<text x="753.7" y="452.7" font-size="12" fill="#000" font-weight="normal" text-anchor="start" textLength="74" lengthAdjust="spacingAndGlyphs" >HR директор</text>
<g transform="translate(757.8,472)">
<path d="M2.5,7 C0.5,8 0.2,10 0.4,11 C0.8,12.2 3,12.4 5.5,12.5 L9.5,12.4 L9.5,7.5 Z" fill="#eeeeee" stroke="#8c8c8c" stroke-width="1.1"/>
<path d="M18.5,7 C20.5,8 20.8,10 20.6,11 C20.2,12.2 18,12.4 15.5,12.5 L11.5,12.4 L11.5,7.5 Z" fill="#eeeeee" stroke="#8c8c8c" stroke-width="1.1"/>
<circle cx="5.3" cy="3.5" r="3.1" fill="#eeeeee" stroke="#8c8c8c" stroke-width="1.1"/>
<circle cx="16" cy="3.5" r="3.1" fill="#eeeeee" stroke="#8c8c8c" stroke-width="1.1"/>
<path d="M2.4,3.3 C4.5,3.5 6.3,2.8 7.6,1.3 M13.1,3.3 C15.2,3.5 17,2.8 18.3,1.3" stroke="#8c8c8c" stroke-width="0.8" fill="none"/>
<path d="M7,11.8 C4.5,13 3.5,15.5 3.8,17 C4.2,18.8 6,19.3 8.8,19.6 L10.5,21.5 L12.2,19.6 C15,19.3 16.8,18.8 17.2,17 C17.5,15.5 16.5,13 14,11.8 Z" fill="#eeeeee" stroke="#8c8c8c" stroke-width="1.1"/>
<path d="M9.2,13.8 L11.8,13.8 L11.2,15.5 L12,19.6 L10.5,21.3 L9,19.6 L9.8,15.5 Z" fill="#eeeeee" stroke="#8c8c8c" stroke-width="0.9"/>
<circle cx="10.5" cy="9.2" r="4.3" fill="#eeeeee" stroke="#8c8c8c" stroke-width="1.1"/>
</g>
<text x="788" y="486.7" font-size="12" fill="#000" font-weight="normal" text-anchor="start" textLength="126" lengthAdjust="spacingAndGlyphs" >Сотрудник HR службы</text>
</svg></body></html>
